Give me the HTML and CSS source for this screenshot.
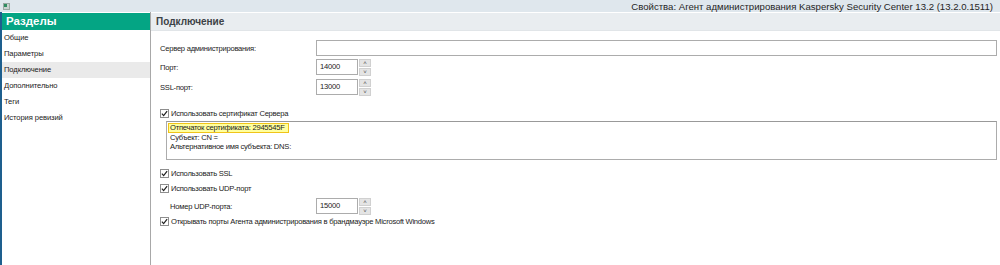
FILE: index.html
```html
<!DOCTYPE html>
<html>
<head>
  <meta charset="utf-8">
  <title>Свойства: Агент администрирования</title>
  <link rel="stylesheet" href="styles.css">
</head>
<body>
  <div class="titlebar">
    <span class="app-icon"><span class="app-icon-dot"></span></span>
    <span class="title">Свойства: Агент администрирования Kaspersky Security Center 13.2 (13.2.0.1511)</span>
  </div>

  <div class="window">
    <div class="sidebar">
      <div class="sidebar-header">Разделы</div>
      <div class="nav-item">Общие</div>
      <div class="nav-item">Параметры</div>
      <div class="nav-item active">Подключение</div>
      <div class="nav-item">Дополнительно</div>
      <div class="nav-item">Теги</div>
      <div class="nav-item">История ревизий</div>
    </div>

    <div class="main">
      <div class="main-header">Подключение</div>

      <div class="content">
        <div class="form-row first">
          <label class="field-label">Сервер администрирования:</label>
          <div class="text-input wide"></div>
        </div>

        <div class="form-row">
          <label class="field-label">Порт:</label>
          <div class="spin">
            <div class="spin-value">14000</div>
            <div class="spin-buttons">
              <span class="spin-btn">&#708;</span>
              <span class="spin-btn">&#709;</span>
            </div>
          </div>
        </div>

        <div class="form-row">
          <label class="field-label">SSL-порт:</label>
          <div class="spin">
            <div class="spin-value">13000</div>
            <div class="spin-buttons">
              <span class="spin-btn">&#708;</span>
              <span class="spin-btn">&#709;</span>
            </div>
          </div>
        </div>

        <div class="check-row cert-check">
          <span class="checkbox"><svg viewBox="0 0 8 8" width="8" height="8"><path d="M1 4.2 L3 6.4 L7 1.2" fill="none" stroke="#222" stroke-width="1.4"/></svg></span>
          <span>Использовать сертификат Сервера</span>
        </div>

        <div class="cert-box">
          <div class="cert-line highlight">Отпечаток сертификата: 2945545F</div>
          <div class="cert-line">Субъект: CN =</div>
          <div class="cert-line">Альтернативное имя субъекта: DNS:</div>
        </div>

        <div class="check-row ssl-check">
          <span class="checkbox"><svg viewBox="0 0 8 8" width="8" height="8"><path d="M1 4.2 L3 6.4 L7 1.2" fill="none" stroke="#222" stroke-width="1.4"/></svg></span>
          <span>Использовать SSL</span>
        </div>

        <div class="check-row">
          <span class="checkbox"><svg viewBox="0 0 8 8" width="8" height="8"><path d="M1 4.2 L3 6.4 L7 1.2" fill="none" stroke="#222" stroke-width="1.4"/></svg></span>
          <span>Использовать UDP-порт</span>
        </div>

        <div class="form-row udp-row">
          <label class="field-label indented">Номер UDP-порта:</label>
          <div class="spin">
            <div class="spin-value">15000</div>
            <div class="spin-buttons">
              <span class="spin-btn">&#708;</span>
              <span class="spin-btn">&#709;</span>
            </div>
          </div>
        </div>

        <div class="check-row">
          <span class="checkbox"><svg viewBox="0 0 8 8" width="8" height="8"><path d="M1 4.2 L3 6.4 L7 1.2" fill="none" stroke="#222" stroke-width="1.4"/></svg></span>
          <span>Открывать порты Агента администрирования в брандмауэре Microsoft Windows</span>
        </div>
      </div>
    </div>
  </div>
</body>
</html>
```

FILE: styles.css
```css
html, body {
  height: 100%;
}

body {
  margin: 0;
  font-family: "Liberation Sans", Arial, sans-serif;
  font-size: 8px;
  color: #222;
  background: white;
  display: flex;
  flex-direction: column;
  overflow: hidden;
}

.titlebar {
  height: 12px;
  flex: none;
  display: flex;
  align-items: center;
  justify-content: space-between;
  background: #dfe7ed;
  padding: 0 7px 0 3px;
}

.app-icon {
  width: 7px;
  height: 7px;
  background: #c9d3d0;
  border: 1px solid #9aa8a4;
  box-sizing: border-box;
  display: flex;
  align-items: flex-start;
  justify-content: flex-start;
}

.app-icon-dot {
  width: 3px;
  height: 3px;
  background: #2f8c60;
}

.title {
  font-size: 9.6px;
  color: #1f1f1f;
}

.window {
  flex: 1;
  display: flex;
  border-left: 2px solid #1e5f8e;
}

.sidebar {
  width: 148px;
  flex: none;
  border-right: 1px solid #a8a8a8;
}

.sidebar-header {
  height: 17px;
  margin-top: 1px;
  background: #04a584;
  color: white;
  font-weight: bold;
  font-size: 11.5px;
  line-height: 17px;
  padding-left: 4px;
}

.nav-item {
  height: 16px;
  line-height: 16px;
  padding-left: 2px;
  font-size: 7.6px;
  letter-spacing: -0.1px;
  color: #222;
}

.nav-item.active {
  background: #eaeaea;
}

.main {
  flex: 1;
  display: flex;
  flex-direction: column;
}

.main-header {
  height: 17px;
  margin-top: 1px;
  line-height: 17px;
  background: #e9edf0;
  border-bottom: 1px solid #e1e5e8;
  padding-left: 5px;
  font-weight: bold;
  font-size: 10px;
  color: #3c4246;
}

.content {
  padding: 9px 3px 0 9px;
  font-size: 7.6px;
  letter-spacing: -0.25px;
}

.form-row {
  display: flex;
  align-items: center;
  height: 16px;
  margin-bottom: 4px;
}

.form-row.first {
  margin-bottom: 3px;
}

.field-label {
  width: 156px;
  flex: none;
}

.field-label.indented {
  padding-left: 10px;
  width: 146px;
}

.text-input {
  height: 16px;
  border: 1px solid #acacac;
  box-sizing: border-box;
  background: white;
}

.text-input.wide {
  flex: 1;
}

.spin {
  display: flex;
  height: 16px;
  width: 55px;
}

.spin-value {
  flex: 1;
  border: 1px solid #acacac;
  box-sizing: border-box;
  padding-left: 3px;
  line-height: 13px;
}

.spin-buttons {
  width: 12px;
  margin-left: 1px;
  display: flex;
  flex-direction: column;
  gap: 1px;
}

.spin-btn {
  flex: 1;
  background: #e4e4e4;
  border: 1px solid #d0d0d0;
  box-sizing: border-box;
  font-size: 6px;
  line-height: 6px;
  color: #444;
  text-align: center;
  letter-spacing: 0;
}

.check-row {
  display: flex;
  align-items: center;
  gap: 2px;
  height: 9px;
  margin-bottom: 6px;
}

.check-row.cert-check {
  margin-top: 14px;
  margin-bottom: 3px;
}

.check-row.ssl-check {
  margin-top: 9px;
}

.checkbox {
  width: 9px;
  height: 9px;
  border: 1px solid #8e8e8e;
  box-sizing: border-box;
  background: white;
  display: flex;
  align-items: center;
  justify-content: center;
}

.checkbox svg {
  width: 7px;
  height: 7px;
}

.cert-box {
  margin-left: 6px;
  height: 39px;
  border: 1px solid #acacac;
  border-top-color: #999;
  padding: 1px 1px;
  box-sizing: border-box;
}

.cert-line {
  line-height: 9px;
  padding-left: 2px;
}

.cert-line.highlight {
  display: inline-block;
  background: #ffff9e;
  border: 1px solid #f0c419;
  padding: 0 3px 0 1px;
  line-height: 8px;
}

.udp-row {
  margin-top: -1px;
  margin-bottom: 3px;
}
```
